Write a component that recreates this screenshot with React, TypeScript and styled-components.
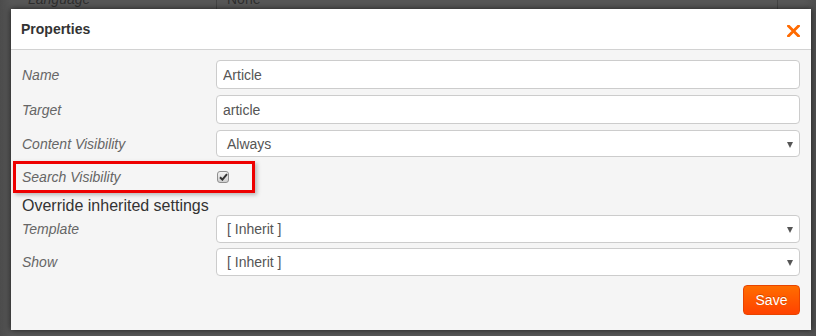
import React from 'react'
import styled, { createGlobalStyle } from 'styled-components'

const GlobalStyle = createGlobalStyle`
  html, body {
    margin: 0;
    padding: 0;
  }
  body {
    font-family: "Liberation Sans", Arial, sans-serif;
    background: #575757;
  }
`

const Page = styled.div`
  position: relative;
  width: 816px;
  height: 336px;
  overflow: hidden;
  background: linear-gradient(to right, #4c4c4c 0px, #575757 12px, #575757 804px, #4e4e4e 816px);
`

const BehindRow = styled.div`
  display: flex;
  align-items: center;
  height: 24px;
  margin-top: -13px;
  font-size: 14px;
  color: #2f2f2f;
`

const BehindLabel = styled.div`
  width: 188px;
  padding-left: 28px;
  font-style: italic;
`

const BehindField = styled.div`
  flex: 1;
  display: flex;
  align-items: center;
  height: 24px;
  margin-right: 38px;
  padding-left: 10px;
  border-left: 1px solid #444;
  border-right: 1px solid #444;
`

const Modal = styled.div`
  position: absolute;
  left: 11px;
  top: 9px;
  width: 800px;
  height: 321px;
  background: #f5f5f5;
  box-shadow: 0 0 6px rgba(0, 0, 0, 0.65);
  display: flex;
  flex-direction: column;
`

const Header = styled.div`
  display: flex;
  align-items: center;
  justify-content: space-between;
  height: 40px;
  padding: 0 11px 0 10px;
  background: #fff;
  border-bottom: 1px solid #d2d2d2;
`

const Title = styled.h3`
  margin: 0;
  font-size: 14px;
  font-weight: bold;
  color: #333;
`

const CloseButton = styled.button`
  display: flex;
  padding: 0;
  margin-top: 4px;
  border: 0;
  background: none;
  cursor: pointer;
`

const Body = styled.div`
  padding: 10px 11px 0 11px;
`

const Row = styled.div<{ gap?: number }>`
  display: flex;
  align-items: center;
  margin-bottom: ${({ gap }) => (gap ?? 6)}px;
`

const Label = styled.label`
  width: 194px;
  flex-shrink: 0;
  font-size: 14px;
  font-style: italic;
  color: #666;
`

const TextInput = styled.input`
  flex: 1;
  box-sizing: border-box;
  height: 29px;
  padding: 0 6px;
  border: 1px solid #ccc;
  border-radius: 4px;
  background: #fff;
  font-family: inherit;
  font-size: 14px;
  color: #555;
  outline: none;
`

const SelectBox = styled.div<{ tall?: boolean }>`
  flex: 1;
  box-sizing: border-box;
  display: flex;
  align-items: center;
  justify-content: space-between;
  height: ${({ tall }) => (tall ? 28 : 27)}px;
  padding: 0 6px 0 10px;
  border: 1px solid #ccc;
  border-radius: 4px;
  background: #fff;
  font-size: 14px;
  color: #555;
`

const Arrow = styled.span`
  width: 0;
  height: 0;
  border-left: 3.5px solid transparent;
  border-right: 3.5px solid transparent;
  border-top: 6px solid #555;
  margin-top: 2px;
`

const Highlight = styled.div`
  display: flex;
  align-items: center;
  box-sizing: border-box;
  width: 242px;
  height: 32px;
  margin: 0 0 4px -9px;
  padding-left: 6px;
  border: 3px solid #ee0000;
  box-shadow: 2px 2px 4px rgba(0, 0, 0, 0.25);
`

const CheckBox = styled.span`
  box-sizing: border-box;
  display: flex;
  align-items: center;
  justify-content: center;
  width: 12px;
  height: 12px;
  margin-left: 1px;
  border: 1px solid #8f8f8f;
  border-radius: 3px;
  background: linear-gradient(#f2f2f2, #cfcfcf);
`

const SectionTitle = styled.div`
  font-size: 16px;
  color: #333;
  line-height: 18px;
  margin-bottom: 0;
`

const Footer = styled.div`
  display: flex;
  justify-content: flex-end;
  padding: 9px 11px 0 11px;
`

const SaveButton = styled.button`
  box-sizing: border-box;
  width: 57px;
  height: 30px;
  border: 1px solid #e84400;
  border-radius: 4px;
  background: linear-gradient(#ff6d00, #ff4200);
  color: #fff;
  font-family: inherit;
  font-size: 14px;
  text-shadow: 0 -1px 0 rgba(0, 0, 0, 0.2);
  cursor: pointer;
`

const Close = () => (
  <svg width="13" height="12" viewBox="0 0 13 12">
    <path d="M1.5 1 L11.5 11 M11.5 1 L1.5 11" stroke="#ff6a00" strokeWidth="2.8" strokeLinecap="square" fill="none" />
  </svg>
)

const Check = () => (
  <svg width="9" height="8" viewBox="0 0 9 8">
    <path d="M1 4.2 L3.4 6.6 L8 1.2" stroke="#333" strokeWidth="2" fill="none" />
  </svg>
)

export default function App() {
  return (
    <Page>
      <GlobalStyle />
      <BehindRow>
        <BehindLabel>Language</BehindLabel>
        <BehindField>None</BehindField>
      </BehindRow>
      <Modal>
        <Header>
          <Title>Properties</Title>
          <CloseButton aria-label="Close">
            <Close />
          </CloseButton>
        </Header>
        <Body>
          <Row>
            <Label>Name</Label>
            <TextInput defaultValue="Article" />
          </Row>
          <Row>
            <Label>Target</Label>
            <TextInput defaultValue="article" />
          </Row>
          <Row gap={4}>
            <Label>Content Visibility</Label>
            <SelectBox>
              Always
              <Arrow />
            </SelectBox>
          </Row>
          <Highlight>
            <Label>Search Visibility</Label>
            <CheckBox>
              <Check />
            </CheckBox>
          </Highlight>
          <SectionTitle>Override inherited settings</SectionTitle>
          <Row gap={5}>
            <Label>Template</Label>
            <SelectBox tall>
              [ Inherit ]
              <Arrow />
            </SelectBox>
          </Row>
          <Row gap={0}>
            <Label>Show</Label>
            <SelectBox tall>
              [ Inherit ]
              <Arrow />
            </SelectBox>
          </Row>
        </Body>
        <Footer>
          <SaveButton>Save</SaveButton>
        </Footer>
      </Modal>
    </Page>
  )
}
